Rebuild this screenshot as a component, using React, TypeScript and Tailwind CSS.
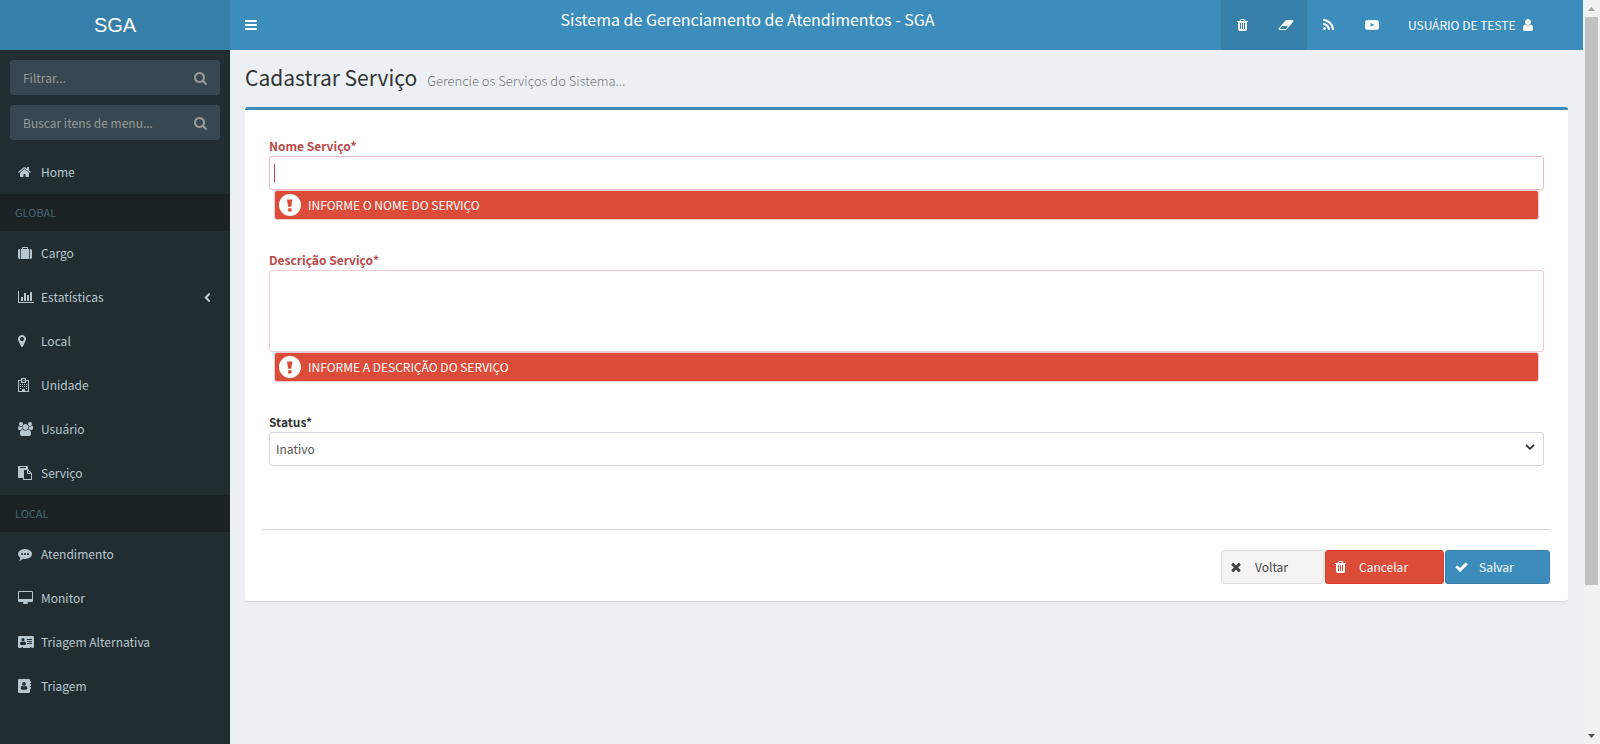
import React from "react";

type IconName = keyof typeof glyphs;

const bar = "q0 26-19 45t-45 19h-1408q-26 0-45-19t-19-45v-128q0-26 19-45t45-19h1408q26 0 45 19t19 45z";
const slot = "q0-14-9-23t-23-9h-64q-14 0-23 9t-9 23v704q0 14 9 23t23 9h64q14 0 23-9t9-23z";
const dot = "q0-53-37.5-90.5t-90.5-37.5-90.5 37.5-37.5 90.5 37.5 90.5 90.5 37.5 90.5-37.5 37.5-90.5z";

/* Each glyph: left edge, width (in 1/128 px at 14px) and path. */
const glyphs = {
  bars: { x: 128, w: 1536, d: `M1664 1344v128${bar}m0-512v128${bar}m0-512v128${bar}` },
  search: {
    x: 64,
    w: 1664,
    d: "M1216 832q0-185-131.5-316.5t-316.5-131.5-316.5 131.5-131.5 316.5 131.5 316.5 316.5 131.5 316.5-131.5 131.5-316.5zm512 832q0 52-38 90t-90 38q-54 0-90-38l-343-342q-179 124-399 124-143 0-273.5-55.5t-225-150-150-225-55.5-273.5 55.5-273.5 150-225 225-150 273.5-55.5 273.5 55.5 225 150 150 225 55.5 273.5q0 220-124 399l343 343q37 37 37 90z",
  },
  home: {
    x: 64,
    w: 1664,
    d: "M1472 992v480q0 26-19 45t-45 19h-384v-384h-256v384h-384q-26 0-45-19t-19-45v-480q0-1 .5-3t.5-3l575-474 575 474q1 2 1 6zm223-69l-62 74q-8 9-21 11h-3q-13 0-21-7l-692-577-692 577q-12 8-24 7-13-2-21-11l-62-74q-8-10-7-23.5t11-21.5l719-599q32-26 76-26t76 26l244 204v-195q0-14 9-23t23-9h192q14 0 23 9t9 23v408l219 182q10 8 11 21.5t-7 23.5z",
  },
  suitcase: {
    x: 0,
    w: 1792,
    d: "M640 384h512v-128h-512v128zm-352 0v1280h-64q-92 0-158-66t-66-158v-832q0-92 66-158t158-66h64zm1120 0v1280h-1024v-1280h128v-160q0-40 28-68t68-28h576q40 0 68 28t28 68v160h128zm384 224v832q0 92-66 158t-158 66h-64v-1280h64q92 0 158 66t66 158z",
  },
  chart: {
    x: 0,
    w: 2048,
    d: "M640 896v512h-256v-512h256zm384-512v1024h-256v-1024h256zm1024 1152v128h-2048v-1536h128v1408h1920zm-640-896v768h-256v-768h256zm384-384v1152h-256v-1152h256z",
  },
  marker: {
    x: 384,
    w: 1024,
    d: "M1152 640q0-106-75-181t-181-75-181 75-75 181 75 181 181 75 181-75 75-181zm256 0q0 109-33 179l-364 774q-16 33-47.5 52t-67.5 19-67.5-19-46.5-52l-365-774q-33-70-33-179 0-212 150-362t362-150 362 150 150 362z",
  },
  hospital: {
    x: 0,
    w: 1536,
    d: "M384 256V64Q384 0 448 0H960Q1024 0 1024 64V256H1344Q1408 256 1408 320V1728Q1408 1792 1344 1792H64Q0 1792 0 1728V320Q0 256 64 256ZM512 128V512H896V128ZM384 384H128V1664H512V1472Q512 1408 576 1408H832Q896 1408 896 1472V1664H1280V384H1024V576Q1024 640 960 640H448Q384 640 384 576ZM576 192H640V288H768V192H832V448H768V352H640V448H576ZM256 768h128v128H256ZM512 768h128v128H512ZM768 768h128v128H768ZM1024 768h128v128H1024ZM256 1024h128v128H256ZM512 1024h128v128H512ZM768 1024h128v128H768ZM1024 1024h128v128H1024ZM256 1280h128v128H256ZM1024 1280h128v128H1024Z",
  },
  users: {
    x: -64,
    w: 1920,
    d: "M529 896q-162 5-265 128h-134q-82 0-138-40.5t-56-118.5q0-353 124-353 6 0 43.5 21t97.5 42.5 119 21.5q67 0 133-23-5 37-5 66 0 159 93 293zm1071 637q0 120-73 189.5t-194 69.5h-874q-121 0-194-69.5t-73-189.5q0-53 3.5-103.5t14-109 26.5-108.5 43-97.5 62-81 85.5-53.5 111.5-20q10 0 43 21.5t73 48 107 48 135 21.5 135-21.5 107-48 73-48 43-21.5q61 0 111.5 20t85.5 53.5 62 81 43 97.5 26.5 108.5 14 109 3.5 103.5zm-1024-1277q0 106-75 181t-181 75-181-75-75-181 75-181 181-75 181 75 75 181zm704 384q0 159-112.5 271.5t-271.5 112.5-271.5-112.5-112.5-271.5 112.5-271.5 271.5-112.5 271.5 112.5 112.5 271.5zm576 225q0 78-56 118.5t-138 40.5h-134q-103-123-265-128 93-134 93-293 0-29-5-66 66 23 133 23 59 0 119-21.5t97.5-42.5 43.5-21q124 0 124 353zm-128-609q0 106-75 181t-181 75-181-75-75-181 75-181 181-75 181 75 75 181z",
  },
  paste: {
    x: 0,
    w: 1792,
    d: "M768 1664h896v-640h-416q-40 0-68-28t-28-68v-416h-384v1152zm256-1440v-64q0-13-9.5-22.5t-22.5-9.5h-704q-13 0-22.5 9.5t-9.5 22.5v64q0 13 9.5 22.5t22.5 9.5h704q13 0 22.5-9.5t9.5-22.5zm256 672h299l-299-299v299zm512 128v672q0 40-28 68t-68 28h-960q-40 0-68-28t-28-68v-160h-544q-40 0-68-28t-28-68v-1344q0-40 28-68t68-28h1088q40 0 68 28t28 68v328q21 13 36 28l408 408q28 28 48 76t20 88z",
  },
  commenting: {
    x: 0,
    w: 1792,
    d: `M640 896${dot}m384 0${dot}m384 0${dot}m384 0q0 174-120 321.5t-326 233-450 85.5q-110 0-211-18-173 173-435 229-52 10-86 13-12 1-22-6t-13-18q-4-15 20-37 5-5 23.5-21.5t25.5-23.5 23.5-25.5 24-31.5 20.5-37 20-48 14.5-57.5 12.5-72.5q-146-90-229.5-216.5t-83.5-269.5q0-174 120-321.5t326-233 450-85.5 450 85.5 326 233 120 321.5z`,
  },
  desktop: {
    x: -64,
    w: 1920,
    d: "M1728 992v-832q0-13-9.5-22.5t-22.5-9.5h-1600q-13 0-22.5 9.5t-9.5 22.5v832q0 13 9.5 22.5t22.5 9.5h1600q13 0 22.5-9.5t9.5-22.5zm128-832v1088q0 66-47 113t-113 47h-544q0 37 16 77.5t32 71 16 43.5q0 26-19 45t-45 19h-512q-26 0-45-19t-19-45q0-14 16-44t32-70 16-78h-544q-66 0-113-47t-47-113v-1088q0-66 47-113t113-47h1600q66 0 113 47t47 113z",
  },
  card: {
    x: 0,
    w: 2048,
    d: "M160 128H1888Q2048 128 2048 288V1504Q2048 1664 1888 1664H1728V1568Q1728 1536 1696 1536H1568Q1536 1536 1536 1568V1664H640V1568Q640 1536 608 1536H480Q448 1536 448 1568V1664H160Q0 1664 0 1504V288Q0 128 160 128ZM640 384Q832 390 832 610Q820 820 640 832Q460 820 448 610Q448 390 640 384ZM450 820Q256 840 256 1120Q256 1280 380 1280H900Q1024 1280 1024 1120Q1024 840 830 820Q740 900 640 900Q540 900 450 820ZM1152 512H1792V640H1152ZM1152 768H1792V896H1152ZM1152 1024H1792V1152H1152Z",
  },
  book: {
    x: 0,
    w: 1792,
    d: "M160 0H1376Q1536 0 1536 160V256H1632Q1664 256 1664 288V480Q1664 512 1632 512H1536V640H1632Q1664 640 1664 672V864Q1664 896 1632 896H1536V1024H1632Q1664 1024 1664 1056V1248Q1664 1280 1632 1280H1536V1632Q1536 1792 1376 1792H160Q0 1792 0 1632V160Q0 0 160 0ZM768 384Q1000 396 1000 630Q990 860 768 876Q546 860 536 630Q536 396 768 384ZM560 850Q352 880 352 1190Q352 1376 490 1376H1046Q1184 1376 1184 1190Q1184 880 976 850Q880 950 768 950Q656 950 560 850Z",
  },
  angleLeft: {
    x: 608,
    w: 640,
    d: "M1203 544q0 13-10 23l-393 393 393 393q10 10 10 23t-10 23l-50 50q-10 10-23 10t-23-10l-466-466q-10-10-10-23t10-23l466-466q10-10 23-10t23 10l50 50q10 10 10 23z",
  },
  trash: {
    x: 192,
    w: 1408,
    d: `M704 1376v-704${slot}m256 0v-704${slot}m256 0v-704${slot}m-544-992h448l-48-117q-7-9-17-11h-317q-10 2-17 11zm928 32v64q0 14-9 23t-23 9h-96v948q0 83-47 143.5t-113 60.5h-832q-66 0-113-58.5t-47-141.5v-952h-96q-14 0-23-9t-9-23v-64q0-14 9-23t23-9h309l70-167q15-37 54-63t79-26h320q40 0 79 26t54 63l70 167h309q14 0 23 9t9 23z`,
  },
  eraser: {
    x: 0,
    w: 2048,
    d: "M960 1408l336-384h-768l-336 384h768zm1013-1077q15 34 9.5 71.5t-30.5 65.5l-896 1024q-38 44-96 44h-768q-38 0-69.5-20.5t-47.5-54.5q-15-34-9.5-71.5t30.5-65.5l896-1024q38-44 96-44h768q38 0 69.5 20.5t47.5 54.5z",
  },
  rss: {
    x: 192,
    w: 1408,
    d: "M576 1344q0 80-56 136t-136 56-136-56-56-136 56-136 136-56 136 56 56 136zm512 123q2 28-17 48-18 21-47 21h-135q-25 0-43-16.5t-20-41.5q-22-229-184.5-391.5t-391.5-184.5q-25-2-41.5-20t-16.5-43v-135q0-29 21-47 17-17 43-17h5q160 13 306 80.5t259 181.5q114 113 181.5 259t80.5 306zm512 2q2 27-18 47-18 20-46 20h-143q-26 0-44.5-17.5t-19.5-42.5q-12-215-101-408.5t-231.5-336-336-231.5-408.5-102q-25-1-42.5-19.5t-17.5-43.5v-143q0-28 20-46 18-18 44-18h3q262 13 501.5 120t425.5 294q187 186 294 425.5t120 501.5z",
  },
  youtube: {
    x: 0,
    w: 1792,
    d: "M711 1128l484-250-484-253v503zm185-862q168 0 324.5 4.5t229.5 9.5l73 4q1 0 17 1.5t23 3 23.5 4.5 28.5 8 28 13 31 19.5 29 26.5q6 6 15.5 18.5t29 58.5 26.5 101q8 64 12.5 136.5t5.5 113.5v176q1 145-18 290-7 55-25 99.5t-32 61.5l-14 17q-14 15-29 26.5t-31 19-28 12.5-28.5 8-24 4.5-23 3-16.5 1.5q-251 19-627 19-207-2-359.5-6.5t-200.5-7.5l-49-4-36-4q-36-5-54.5-10t-51-21-56.5-41q-6-6-15.5-18.5t-29-58.5-26.5-101q-8-64-12.5-136.5t-5.5-113.5v-176q-1-145 18-290 7-55 25-99.5t32-61.5l14-17q14-15 29-26.5t31-19.5 28-13 28.5-8 23.5-4.5 23-3 17-1.5q251-18 627-18z",
  },
  user: {
    x: 256,
    w: 1280,
    d: "M1536 1399q0 109-62.5 187t-150.5 78h-854q-88 0-150.5-78t-62.5-187q0-85 8.5-160.5t31.5-152 58.5-131 94-89 134.5-34.5q131 128 313 128t313-128q76 0 134.5 34.5t94 89 58.5 131 31.5 152 8.5 160.5zm-256-887q0 159-112.5 271.5t-271.5 112.5-271.5-112.5-112.5-271.5 112.5-271.5 271.5-112.5 271.5 112.5 112.5 271.5z",
  },
  times: {
    x: 256,
    w: 1280,
    d: "M1490 1322q0 40-28 68l-136 136q-28 28-68 28t-68-28l-294-294-294 294q-28 28-68 28t-68-28l-136-136q-28-28-28-68t28-68l294-294-294-294q-28-28-28-68t28-68l136-136q28-28 68-28t68 28l294 294 294-294q28-28 68-28t68 28l136 136q28 28 28 68t-28 68l-294 294 294 294q28 28 28 68z",
  },
  check: {
    x: 64,
    w: 1664,
    d: "M1671 566q0 40-28 68l-724 724-136 136q-28 28-68 28t-68-28l-136-136-362-362q-28-28-28-68t28-68l136-136q28-28 68-28t68 28l294 295 656-657q28-28 68-28t68 28l136 136q28 28 28 68z",
  },
};

function Icon({ name, className }: { name: IconName; className?: string }) {
  const g = glyphs[name];
  return (
    <svg
      aria-hidden="true"
      width={g.w / 128}
      height={14}
      viewBox={`${g.x} 0 ${g.w} 1792`}
      fill="currentColor"
      className={className}
    >
      <path d={g.d} fillRule={name === "users" ? "nonzero" : "evenodd"} />
    </svg>
  );
}

function MenuSearch({ id, label }: { id: string; label: string }) {
  return (
    <form className="flex h-[35px] rounded-[3px] bg-[#374850]" onSubmit={(e) => e.preventDefault()}>
      <input
        id={id}
        type="text"
        aria-label={label}
        placeholder={label}
        className="min-w-0 flex-1 bg-transparent pl-[13px] text-[12px] leading-5 text-white outline-none placeholder:text-[#999]"
      />
      <button type="submit" aria-label="Buscar" className="flex w-[39px] items-center justify-center text-[#999]">
        <Icon name="search" />
      </button>
    </form>
  );
}

function MenuItem({ icon, label, tree }: { icon: IconName; label: string; tree?: boolean }) {
  return (
    <li>
      <a href="#" className="flex h-11 items-center pr-5 pl-[18px] text-[#b8c7ce]">
        <span className="w-[23px]">
          <Icon name={icon} />
        </span>
        <span className="flex-1">{label}</span>
        {tree && <Icon name="angleLeft" className="overflow-visible stroke-current stroke-[140]" />}
      </a>
    </li>
  );
}

function MenuHeader({ children }: { children: React.ReactNode }) {
  return (
    <li className="flex h-[37px] items-center bg-[#1a2226] pb-0.5 pl-[15px] text-[11px] text-[#4b646f]">{children}</li>
  );
}

function FieldError({ id, children }: { id: string; children: React.ReactNode }) {
  return (
    <div
      id={id}
      role="alert"
      className="mx-[5px] flex h-[30px] items-center gap-[7px] rounded-[3px] border border-[#ebccd1] bg-[#dd4b39] pl-1 text-white"
    >
      <svg aria-hidden="true" width="22" height="22" viewBox="0 0 22 22">
        <circle cx="11" cy="11" r="11" fill="#fff" />
        <path d="M8 5.4h5.4l-1.1 7.4H9.1zM9.2 14.2h3.3v3.2H9.2z" fill="#dd4b39" />
      </svg>
      <span>{children}</span>
    </div>
  );
}

function TopIcon({ icon, label, dark }: { icon: IconName; label: string; dark?: boolean }) {
  return (
    <a
      href="#"
      aria-label={label}
      className={`flex w-[43px] items-center justify-center ${dark ? "bg-[#367fa9] text-[#f6f6f6]" : "text-white"}`}
    >
      <Icon name={icon} />
    </a>
  );
}

function ActionButton({
  type = "button",
  icon,
  className,
  children,
}: {
  type?: "button" | "submit";
  icon: IconName;
  className: string;
  children: React.ReactNode;
}) {
  return (
    <button type={type} className={`flex h-[34px] items-center rounded-[3px] border pl-[9px] ${className}`}>
      <span className="w-6">
        <Icon name={icon} />
      </span>
      <span>{children}</span>
    </button>
  );
}

export default function App() {
  return (
    <div className="flex h-screen overflow-hidden bg-[#ecf0f5] font-['Noto_Sans_CJK_SC','Noto_Sans_CJK_JP',sans-serif] text-[12px] leading-5 text-[#333]">
      <aside className="flex w-[230px] shrink-0 flex-col bg-[#222d32]">
        <a
          href="#"
          className="flex h-[50px] shrink-0 items-center justify-center bg-[#367fa9] font-['Liberation_Sans',sans-serif] text-[20px] text-white"
        >
          SGA
        </a>
        <div className="flex flex-col gap-2.5 p-2.5">
          <MenuSearch id="filtrar" label="Filtrar..." />
          <MenuSearch id="buscar" label="Buscar itens de menu..." />
        </div>
        <nav>
          <ul>
            <MenuItem icon="home" label="Home" />
            <MenuHeader>GLOBAL</MenuHeader>
            <MenuItem icon="suitcase" label="Cargo" />
            <MenuItem icon="chart" label="Estatísticas" tree />
            <MenuItem icon="marker" label="Local" />
            <MenuItem icon="hospital" label="Unidade" />
            <MenuItem icon="users" label="Usuário" />
            <MenuItem icon="paste" label="Serviço" />
            <MenuHeader>LOCAL</MenuHeader>
            <MenuItem icon="commenting" label="Atendimento" />
            <MenuItem icon="desktop" label="Monitor" />
            <MenuItem icon="card" label="Triagem Alternativa" />
            <MenuItem icon="book" label="Triagem" />
          </ul>
        </nav>
      </aside>

      <div className="flex min-w-0 flex-1 flex-col">
        <header className="flex h-[50px] shrink-0 bg-[#3c8dbc] text-white">
          <button type="button" aria-label="Alternar menu" className="flex w-11 items-center pl-[15px]">
            <Icon name="bars" />
          </button>
          <div className="flex-1 pt-[9px] text-center text-[16px]">Sistema de Gerenciamento de Atendimentos - SGA</div>
          <nav className="flex">
            <TopIcon icon="trash" label="Limpar" dark />
            <TopIcon icon="eraser" label="Apagar" dark />
            <TopIcon icon="rss" label="Notícias" />
            <TopIcon icon="youtube" label="Vídeos" />
            <a href="#" className="flex min-w-[190px] items-center justify-between pr-[50px] pl-[15px]">
              USUÁRIO DE TESTE
              <Icon name="user" />
            </a>
          </nav>
        </header>

        <main className="px-[15px]">
          <div className="flex items-baseline gap-2.5 pt-3.5 pb-4">
            <h1 className="text-[21px] leading-[26px]">Cadastrar Serviço</h1>
            <small className="text-[13px] font-light text-[#777]">Gerencie os Serviços do Sistema...</small>
          </div>

          <form
            className="rounded-[3px] border-t-[3px] border-[#3c8dbc] bg-white px-[17px] pt-[26px] pb-[17px] shadow-[0_1px_1px_rgba(0,0,0,0.1)]"
            onSubmit={(e) => e.preventDefault()}
          >
            <div className="px-[7px]">
              <div className="mb-[30px]">
                <label htmlFor="nome" className="block font-bold text-[#b94a48]">
                  Nome Serviço*
                </label>
                <div className="relative">
                  <input
                    id="nome"
                    type="text"
                    aria-describedby="nome-erro"
                    className="block h-[34px] w-full rounded-[3px] border border-[#e6bcc6] bg-white px-[5px] outline-none"
                  />
                  <span className="absolute top-2 left-[5px] h-[18px] w-px bg-[#b94a48]" />
                </div>
                <FieldError id="nome-erro">INFORME O NOME DO SERVIÇO</FieldError>
              </div>

              <div className="mb-[30px]">
                <label htmlFor="descricao" className="block font-bold text-[#b94a48]">
                  Descrição Serviço*
                </label>
                <textarea
                  id="descricao"
                  aria-describedby="descricao-erro"
                  className="block h-[82px] w-full resize-none rounded-[3px] border border-[#ebccd1] bg-white px-[5px] outline-none"
                />
                <FieldError id="descricao-erro">INFORME A DESCRIÇÃO DO SERVIÇO</FieldError>
              </div>

              <div>
                <label htmlFor="status" className="block font-bold">
                  Status*
                </label>
                <div className="relative">
                  <select
                    id="status"
                    defaultValue="Inativo"
                    className="block h-[34px] w-full appearance-none rounded-[3px] border border-[#d2d6de] bg-white px-1.5 text-[#555] outline-none"
                  >
                    <option>Inativo</option>
                    <option>Ativo</option>
                  </select>
                  <svg
                    aria-hidden="true"
                    width="10"
                    height="6"
                    viewBox="0 0 10 6"
                    className="pointer-events-none absolute top-3 right-[9px]"
                  >
                    <path d="M1 .8l4 4 4-4" fill="none" stroke="#333" strokeWidth="1.8" />
                  </svg>
                </div>
              </div>
            </div>

            <hr className="mt-[63px] mb-5 border-[#d2d6de]" />

            <div className="flex justify-end gap-px pr-px">
              <ActionButton icon="times" className="w-[103px] border-[#ddd] bg-[#f4f4f4] text-[#444]">
                Voltar
              </ActionButton>
              <ActionButton icon="trash" className="w-[119px] border-[#d73925] bg-[#dd4b39] text-white">
                Cancelar
              </ActionButton>
              <ActionButton type="submit" icon="check" className="w-[105px] border-[#367fa9] bg-[#3c8dbc] text-white">
                Salvar
              </ActionButton>
            </div>
          </form>
        </main>
      </div>

      <div aria-hidden="true" className="flex w-[17px] shrink-0 flex-col bg-[#f1f1f1]">
        <div className="flex h-[17px] items-center justify-center">
          <svg width="7" height="4" viewBox="0 0 7 4">
            <path d="M0 4L3.5 0 7 4z" fill="#a3a3a3" />
          </svg>
        </div>
        <div className="mx-0.5 grow-[4] bg-[#c1c1c1]" />
        <div className="grow" />
        <div className="flex h-[17px] items-center justify-center">
          <svg width="7" height="4" viewBox="0 0 7 4">
            <path d="M0 0L3.5 4 7 0z" fill="#505050" />
          </svg>
        </div>
      </div>
    </div>
  );
}
